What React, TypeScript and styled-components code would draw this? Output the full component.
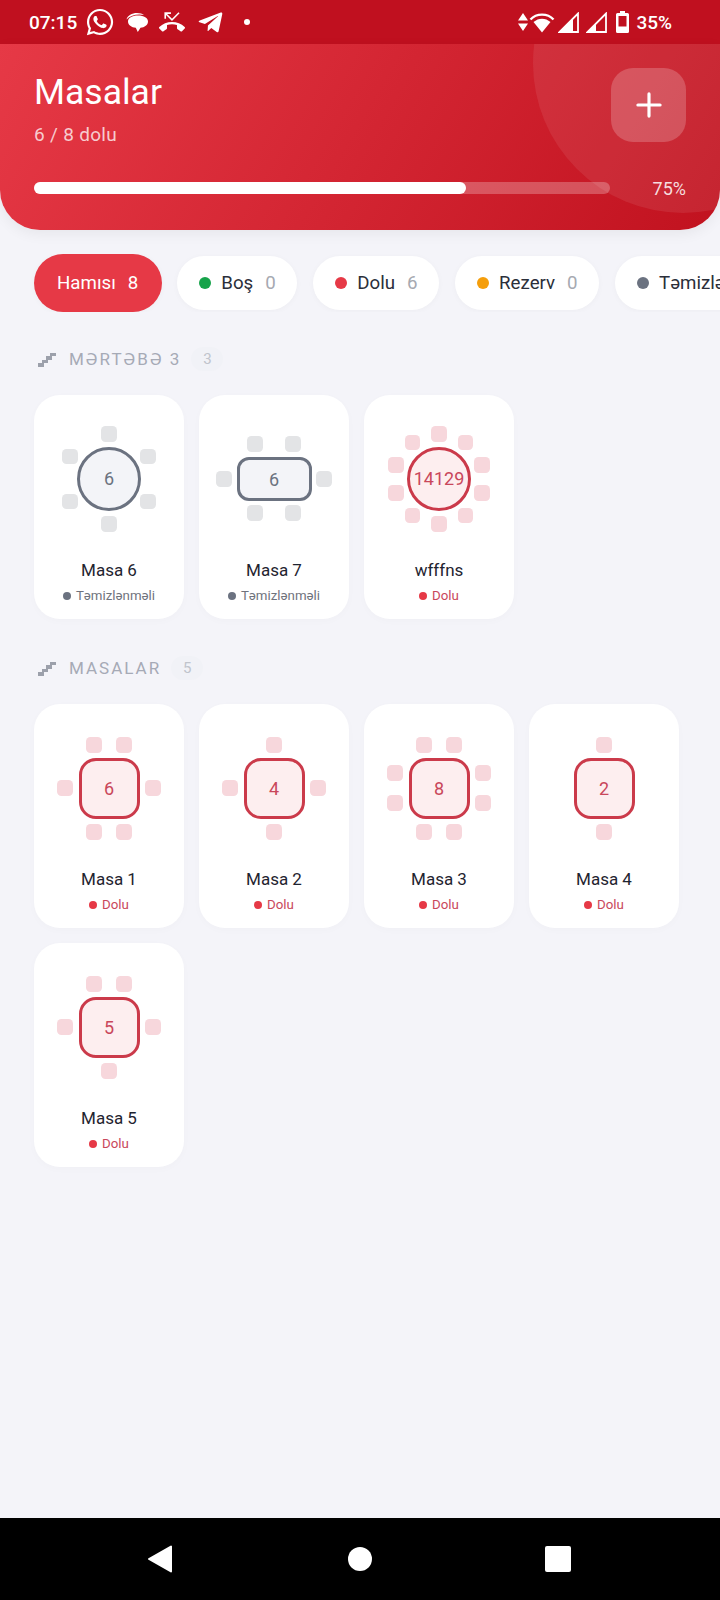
import React from 'react';
import styled, { createGlobalStyle } from 'styled-components';
import { Plus } from 'lucide-react';
import { FaWhatsapp, FaTelegramPlane } from 'react-icons/fa';
import { MdPhoneMissed } from 'react-icons/md';

const GlobalStyle = createGlobalStyle`
  html, body {
    margin: 0;
    padding: 0;
    background: #f4f4f9;
  }
  * {
    box-sizing: border-box;
  }
`;

type Tone = 'clean' | 'full';
type Shape = 'round' | 'square' | 'wide';
type Point = [number, number];

const tones = {
  clean: { line: '#6b7280', fill: '#f3f4f8', text: '#6b7280', seat: '#e3e4e6', dot: '#6b7280', status: '#6f737d' },
  full: { line: '#cb3a4a', fill: '#fdeeef', text: '#c9475b', seat: '#f7d7dc', dot: '#e63946', status: '#c9475b' },
};

const Page = styled.div`
  width: 720px;
  height: 1600px;
  display: flex;
  flex-direction: column;
  overflow: hidden;
  background: #f4f4f9;
  font-family: Roboto, 'Noto Sans', sans-serif;
`;

const StatusBar = styled.div`
  height: 44px;
  flex: none;
  display: flex;
  align-items: center;
  justify-content: space-between;
  padding: 0 48px 0 29px;
  background: #c0101f;
  color: #fff;
  font-size: 19px;
  font-weight: 500;
`;

const StatusGroup = styled.div`
  display: flex;
  align-items: center;
`;

const StatusIcon = styled.span<{ $gap: number }>`
  display: flex;
  margin-left: ${p => p.$gap}px;
`;

const Header = styled.header`
  position: relative;
  flex: none;
  height: 186px;
  padding: 24px 34px 0;
  overflow: hidden;
  border-radius: 0 0 40px 40px;
  background: linear-gradient(120deg, #e63946 0%, #c1121f 100%);
  box-shadow: 0 4px 14px rgba(0, 0, 0, 0.06);
  color: #fff;
`;

const HeaderBlob = styled.div`
  position: absolute;
  top: -131px;
  right: -113px;
  width: 300px;
  height: 300px;
  border-radius: 50%;
  background: rgba(255, 255, 255, 0.08);
`;

const HeaderTop = styled.div`
  position: relative;
  display: flex;
  justify-content: space-between;
`;

const Title = styled.h1`
  margin: 0;
  padding-top: 1px;
  font-size: 35.5px;
  line-height: 46px;
  font-weight: 400;
`;

const Subtitle = styled.div`
  margin-top: 8px;
  font-size: 19px;
  letter-spacing: 0.3px;
  line-height: 24px;
  color: rgba(255, 255, 255, 0.75);
`;

const AddButton = styled.div`
  width: 75px;
  height: 74px;
  display: flex;
  align-items: center;
  justify-content: center;
  border-radius: 22px;
  background: rgba(255, 255, 255, 0.2);
`;

const ProgressRow = styled.div`
  position: relative;
  margin-top: 29px;
  display: flex;
  align-items: center;
`;

const Track = styled.div`
  flex: 1;
  height: 12px;
  border-radius: 6px;
  background: rgba(255, 255, 255, 0.25);
`;

const Fill = styled.div`
  height: 100%;
  border-radius: 6px;
  background: #fff;
`;

const Percent = styled.div`
  width: 76px;
  padding-top: 2px;
  text-align: right;
  font-size: 18px;
  color: rgba(255, 255, 255, 0.85);
`;

const ChipRow = styled.div`
  flex: none;
  margin-top: 24px;
  padding-left: 34px;
  height: 58px;
  display: flex;
  align-items: center;
  gap: 16px;
  overflow: hidden;
`;

const Chip = styled.div<{ $active?: boolean }>`
  flex: none;
  height: ${p => (p.$active ? 58 : 54)}px;
  margin-right: ${p => (p.$active ? -1 : 0)}px;
  padding: 0 ${p => (p.$active ? 24 : 21.5)}px 0 ${p => (p.$active ? 23 : 22)}px;
  display: flex;
  align-items: center;
  border-radius: 29px;
  background: ${p => (p.$active ? '#e63946' : '#fff')};
  color: ${p => (p.$active ? '#fff' : '#2b2f3a')};
  font-size: 18.7px;
  box-shadow: 0 1px 6px rgba(0, 0, 0, 0.03);
`;

const Dot = styled.span<{ $color: string; $size: number; $gap: number }>`
  flex: none;
  width: ${p => p.$size}px;
  height: ${p => p.$size}px;
  margin-right: ${p => p.$gap}px;
  border-radius: 50%;
  background: ${p => p.$color};
`;

const ChipCount = styled.span<{ $active?: boolean }>`
  margin-left: 12px;
  color: ${p => (p.$active ? '#fff' : '#a6a9b1')};
`;

const Main = styled.main`
  flex: 1;
  padding: 35px 34px 0;
`;

const Section = styled.section`
  & + & {
    margin-top: 37px;
  }
`;

const SectionHead = styled.div`
  height: 24px;
  display: flex;
  align-items: center;
  padding-left: 3px;
  margin-bottom: 24px;
`;

const SectionTitle = styled.span`
  margin-left: 12px;
  font-size: 17px;
  font-weight: 400;
  letter-spacing: 2px;
  color: #a6aab6;
`;

const SectionCount = styled.span`
  margin-left: 10px;
  min-width: 32px;
  height: 24px;
  display: flex;
  align-items: center;
  justify-content: center;
  border-radius: 12px;
  background: #f1f2f7;
  font-size: 15px;
  color: #c0c4cc;
`;

const Grid = styled.div`
  display: grid;
  grid-template-columns: repeat(4, 150px);
  gap: 15px;
`;

const Card = styled.div`
  height: 224px;
  padding-top: 24px;
  display: flex;
  flex-direction: column;
  align-items: center;
  border-radius: 26px;
  background: #fff;
  box-shadow: 0 2px 8px rgba(0, 0, 0, 0.02);
`;

const Floor = styled.div`
  position: relative;
  width: 150px;
  height: 120px;
  flex: none;
  display: flex;
  align-items: center;
  justify-content: center;
`;

const TableTop = styled.div<{ $shape: Shape; $tone: Tone }>`
  width: ${p => (p.$shape === 'wide' ? 75 : p.$shape === 'round' ? 64 : 61)}px;
  height: ${p => (p.$shape === 'wide' ? 44 : p.$shape === 'round' ? 64 : 61)}px;
  margin-top: ${p => (p.$shape === 'round' ? -1 : 0)}px;
  display: flex;
  align-items: center;
  justify-content: center;
  border: 3.5px solid ${p => tones[p.$tone].line};
  border-radius: ${p => (p.$shape === 'round' ? '50%' : p.$shape === 'wide' ? '12px' : '17px')};
  background: ${p => tones[p.$tone].fill};
  color: ${p => tones[p.$tone].text};
  font-size: 18px;
`;

const Seat = styled.div<{ $tone: Tone }>`
  position: absolute;
  width: 15.5px;
  height: 15.5px;
  border-radius: 4.5px;
  background: ${p => tones[p.$tone].seat};
`;

const TableName = styled.div`
  margin-top: 20px;
  font-size: 17px;
  line-height: 22px;
  color: #1f2430;
`;

const TableStatus = styled.div<{ $tone: Tone }>`
  margin-top: 5.5px;
  display: flex;
  align-items: center;
  font-size: 13.3px;
  line-height: 18px;
  color: ${p => tones[p.$tone].status};
`;

const NavBar = styled.nav`
  height: 82px;
  flex: none;
  display: flex;
  align-items: center;
  justify-content: space-between;
  padding: 0 149px 0 148px;
  background: #000;
`;

const NavHome = styled.div`
  width: 24px;
  height: 24px;
  border-radius: 50%;
  background: #fff;
`;

const NavRecent = styled.div`
  width: 26px;
  height: 26px;
  border-radius: 2px;
  background: #fff;
`;

const ring = (count: number, radius: number): Point[] =>
  Array.from({ length: count }, (_, i) => {
    const angle = (i * 2 * Math.PI) / count;
    return [radius * Math.sin(angle), -radius * Math.cos(angle)] as Point;
  });

const row = (y: number, ...xs: number[]): Point[] => xs.map(x => [x, y] as Point);

const tablesA = [
  { name: 'Masa 6', label: '6', shape: 'round', tone: 'clean', seats: ring(6, 45) },
  {
    name: 'Masa 7',
    label: '6',
    shape: 'wide',
    tone: 'clean',
    seats: [...row(-35, -19, 19), ...row(34, -19, 19), ...row(0, -50, 50)],
  },
  { name: 'wfffns', label: '14129', shape: 'round', tone: 'full', seats: ring(10, 45) },
] as const;

const tablesB = [
  { name: 'Masa 1', label: '6', shape: 'square', tone: 'full', seats: [...row(-43, -15, 15), ...row(0, -44, 44), ...row(44, -15, 15)] },
  { name: 'Masa 2', label: '4', shape: 'square', tone: 'full', seats: [...row(-43, 0), ...row(0, -44, 44), ...row(44, 0)] },
  {
    name: 'Masa 3',
    label: '8',
    shape: 'square',
    tone: 'full',
    seats: [...row(-43, -15, 15), ...row(-15, -44, 44), ...row(15, -44, 44), ...row(44, -15, 15)],
  },
  { name: 'Masa 4', label: '2', shape: 'square', tone: 'full', seats: [...row(-43, 0), ...row(44, 0)] },
  { name: 'Masa 5', label: '5', shape: 'square', tone: 'full', seats: [...row(-43, -15, 15), ...row(0, -44, 44), ...row(44, 0)] },
] as const;

const chips = [
  { label: 'Boş', count: 0, color: '#16a34a' },
  { label: 'Dolu', count: 6, color: '#e63946' },
  { label: 'Rezerv', count: 0, color: '#f59e0b' },
  { label: 'Təmizlənməli', count: 2, color: '#6b7280' },
];

const ChatIcon = () => (
  <svg width="22" height="21" viewBox="0 0 22 21" fill="#fff">
    <path d="M.5 7.5C1.500 3.500 6 1 11 1c3 0 5.500.7 7 2C12 1.500 4.500 3 .5 7.500z" />
    <path d="M2 9.500C2 6 6 3.500 12 3.500s10 2.500 10 6-3.500 6-7.500 6.300l-2.700 4.200-2-4.300C5.500 15.500 2 13 2 9.500z" />
  </svg>
);

const DataArrows = () => (
  <svg width="10" height="18" viewBox="0 0 10 18" fill="#fff">
    <path d="M5 0l5 7.500H0zM0 10.500h10L5 18z" />
  </svg>
);

const WifiIcon = () => (
  <svg width="26" height="21" viewBox="0 0 26 21" fill="none">
    <path d="M1.500 7.500C7.500 1 18.500 1 24.500 7.500" stroke="#fff" strokeWidth="2.400" />
    <path d="M4.500 10C9.500 5.500 16.500 5.500 21.500 10L13 20.500z" fill="#fff" />
  </svg>
);

const SignalIcon = ({ level }: { level: number }) => (
  <svg width="21" height="21" viewBox="0 0 21 21" fill="none">
    <path d="M20 1.500V20H1.500z" stroke="#fff" strokeWidth="1.800" strokeLinejoin="miter" />
    <path d={`M1 20.500 ${level} ${21 - level}V20.500z`} fill="#fff" />
  </svg>
);

const BatteryIcon = () => (
  <svg width="13" height="22" viewBox="0 0 13 22" fill="#fff">
    <path
      fillRule="evenodd"
      d="M4 0h5v2h2.500A1.500 1.500 0 0 1 13 3.500v17a1.500 1.500 0 0 1-1.500 1.500h-10A1.500 1.500 0 0 1 0 20.500v-17A1.500 1.500 0 0 1 1.500 2H4zM2.500 5v10.500h8V5z"
    />
  </svg>
);

const StairsIcon = () => (
  <svg width="20" height="17" viewBox="0 0 20 17" fill="#9ca0ab">
    <path d="M1 16v-4h4V9h4V5h4V2h6v3h-4v4h-4v3H7v4z" />
  </svg>
);

const BackIcon = () => (
  <svg width="26" height="30" viewBox="0 0 26 30" fill="#fff" stroke="#fff" strokeWidth="2" strokeLinejoin="round">
    <path d="M1 15 23 2.500v25z" />
  </svg>
);

type TableData = {
  name: string;
  label: string;
  shape: string;
  tone: string;
  seats: readonly Point[];
};

const TableCard = ({ table }: { table: TableData }) => {
  const tone = table.tone as Tone;
  return (
    <Card>
      <Floor>
        {table.seats.map(([dx, dy], i) => (
          <Seat key={i} $tone={tone} style={{ left: 67.25 + dx, top: 52.25 + dy }} />
        ))}
        <TableTop $shape={table.shape as Shape} $tone={tone}>{table.label}</TableTop>
      </Floor>
      <TableName>{table.name}</TableName>
      <TableStatus $tone={tone}>
        <Dot $color={tones[tone].dot} $size={8} $gap={5} />
        {tone === 'full' ? 'Dolu' : 'Təmizlənməli'}
      </TableStatus>
    </Card>
  );
};

const App = () => {
  return (
    <Page>
      <GlobalStyle />
      <StatusBar>
        <StatusGroup>
          07:15
          <StatusIcon $gap={8}><FaWhatsapp size={30} /></StatusIcon>
          <StatusIcon $gap={11}><ChatIcon /></StatusIcon>
          <StatusIcon $gap={11}><MdPhoneMissed size={26} /></StatusIcon>
          <StatusIcon $gap={12}><FaTelegramPlane size={27} /></StatusIcon>
          <StatusIcon $gap={20}><Dot $color="#fff" $size={6} $gap={0} /></StatusIcon>
        </StatusGroup>
        <StatusGroup>
          <StatusIcon $gap={0}><DataArrows /></StatusIcon>
          <StatusIcon $gap={1}><WifiIcon /></StatusIcon>
          <StatusIcon $gap={3}><SignalIcon level={15} /></StatusIcon>
          <StatusIcon $gap={7}><SignalIcon level={10} /></StatusIcon>
          <StatusIcon $gap={9}><BatteryIcon /></StatusIcon>
          <StatusIcon $gap={7}>35%</StatusIcon>
        </StatusGroup>
      </StatusBar>

      <Header>
        <HeaderBlob />
        <HeaderTop>
          <div>
            <Title>Masalar</Title>
            <Subtitle>6 / 8 dolu</Subtitle>
          </div>
          <AddButton>
            <Plus size={38} color="#fff" strokeWidth={2} />
          </AddButton>
        </HeaderTop>
        <ProgressRow>
          <Track>
            <Fill style={{ width: `${(6 / 8) * 100}%` }} />
          </Track>
          <Percent>75%</Percent>
        </ProgressRow>
      </Header>

      <ChipRow>
        <Chip $active>
          Hamısı
          <ChipCount $active>8</ChipCount>
        </Chip>
        {chips.map(chip => (
          <Chip key={chip.label}>
            <Dot $color={chip.color} $size={12} $gap={10} />
            {chip.label}
            <ChipCount>{chip.count}</ChipCount>
          </Chip>
        ))}
      </ChipRow>

      <Main>
        <Section>
          <SectionHead>
            <StairsIcon />
            <SectionTitle>MƏRTƏBƏ 3</SectionTitle>
            <SectionCount>3</SectionCount>
          </SectionHead>
          <Grid>
            {tablesA.map(table => <TableCard key={table.name} table={table} />)}
          </Grid>
        </Section>
        <Section>
          <SectionHead>
            <StairsIcon />
            <SectionTitle>MASALAR</SectionTitle>
            <SectionCount>5</SectionCount>
          </SectionHead>
          <Grid>
            {tablesB.map(table => <TableCard key={table.name} table={table} />)}
          </Grid>
        </Section>
      </Main>

      <NavBar>
        <BackIcon />
        <NavHome />
        <NavRecent />
      </NavBar>
    </Page>
  );
};

export default App;
